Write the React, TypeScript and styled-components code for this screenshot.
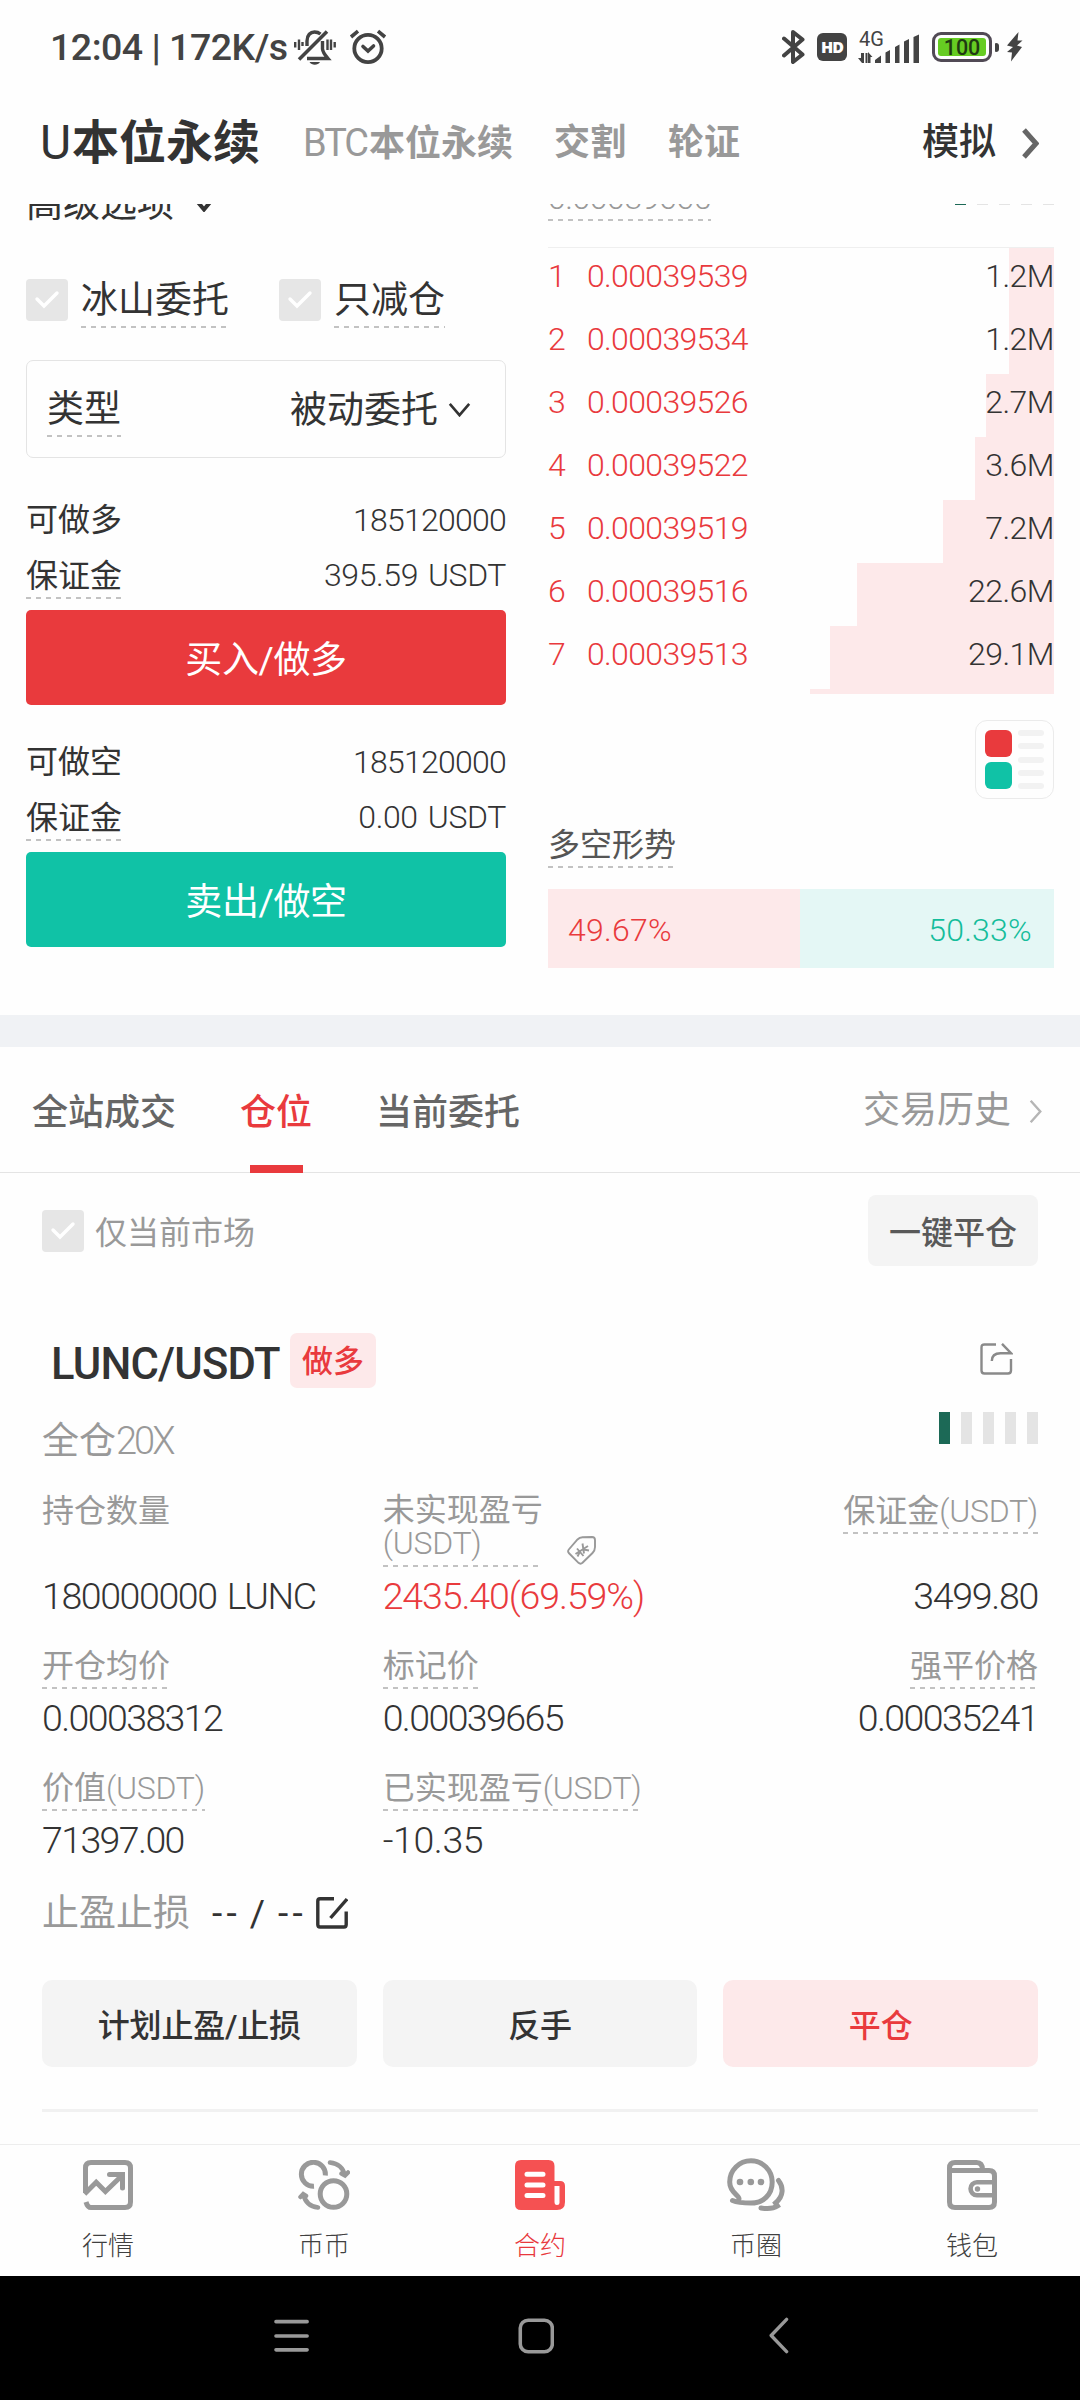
import React from "react";
import styled, { createGlobalStyle } from "styled-components";

const RED = "#e93a3d";
const GREEN = "#10c2a6";
const INK = "#333333";
const MUTED = "#999999";

const GlobalStyle = createGlobalStyle`
  * { box-sizing: border-box; }
  body {
    margin: 0;
    background: #fefefe;
    color: ${INK};
    font-family: Roboto, "Noto Sans CJK SC", sans-serif;
  }
`;

const Screen = styled.div`
  width: 1080px;
  height: 2400px;
  display: flex;
  flex-direction: column;
  background: #fefefe;
  overflow: hidden;
`;

/* status bar */

const StatusBar = styled.header`
  height: 94px;
  flex: none;
  display: flex;
  align-items: center;
  padding: 0 57px 0 50px;
  color: #434343;
`;

const Clock = styled.span`
  width: 244px;
  font-size: 37.5px;
  font-weight: 500;
  letter-spacing: -0.5px;
  white-space: nowrap;
  line-height: 44px;
`;

const StatusLeft = styled.div`
  display: flex;
  align-items: center;
  gap: 13px;
`;

const StatusRight = styled.div`
  margin-left: auto;
  display: flex;
  align-items: center;
`;

const HdBadge = styled.span`
  width: 30px;
  height: 28px;
  margin: 0 11px 0 12px;
  border-radius: 6px;
  background: #434343;
  color: #fff;
  font: 800 16px/28px "Open Sans", Roboto, sans-serif;
  letter-spacing: -1px;
  text-align: center;
`;

const Network = styled.div`
  width: 62px;
  height: 33px;
  display: grid;
  position: relative;
`;

const NetworkLabel = styled.span`
  position: absolute;
  left: 1px;
  top: -1px;
  font: 400 20px/18px Roboto, sans-serif;
`;

const Battery = styled.div`
  width: 60px;
  height: 30px;
  margin-left: 12px;
  padding: 3px;
  border: 3px solid #514a55;
  border-radius: 9px;
`;

const BatteryLevel = styled.div`
  height: 18px;
  border-radius: 3px;
  background: #66cc22;
  color: #1f3a12;
  font: 500 21.5px/19px Roboto, sans-serif;
  text-align: center;
`;

const BatteryTip = styled.span`
  width: 4px;
  height: 9px;
  margin: 0 7px 0 3px;
  border-radius: 1px 3px 3px 1px;
  background: #434343;
`;

/* market header */

const MarketHeader = styled.nav`
  height: 110px;
  flex: none;
  display: flex;
  align-items: center;
  padding: 0 41px 12px 40px;
`;

const MarketTab = styled.span<{ $active?: boolean }>`
  display: flex;
  align-items: baseline;
  font-size: ${(p) => (p.$active ? 47 : 36)}px;
  line-height: 60px;
  font-weight: 700;
  color: ${(p) => (p.$active ? INK : MUTED)};
`;

const MarketLatin = styled.span<{ $size: number; $width: number }>`
  width: ${(p) => p.$width}px;
  font-size: ${(p) => p.$size}px;
  font-weight: 400;
  letter-spacing: -2px;
`;

const DemoLink = styled.span`
  margin-left: auto;
  display: flex;
  align-items: center;
  gap: 25px;
  font-size: 37px;
  font-weight: 500;
  line-height: 60px;
`;

const Spacer = styled.span<{ $w: number }>`
  flex: none;
  width: ${(p) => p.$w}px;
`;

/* shared text pieces */

const Dashed = styled.span<{ $size?: number; $color?: string }>`
  display: inline-block;
  padding-top: 2px;
  font-size: ${(p) => p.$size ?? 32}px;
  line-height: ${(p) => ((p.$size ?? 32) > 35 ? 54 : 46)}px;
  color: ${(p) => p.$color ?? INK};
  white-space: nowrap;
  background: repeating-linear-gradient(90deg, #c2c2c2 0 5px, transparent 5px 10px) left bottom / 100% 2px no-repeat;
`;

const Num = styled.span<{ $size?: number; $track?: number }>`
  font-size: ${(p) => p.$size ?? 32}px;
  font-weight: 350;
  letter-spacing: ${(p) => p.$track ?? ((p.$size ?? 32) > 35 ? -1.6 : -0.75)}px;
  word-spacing: 2.5px;
`;

/* trading panel */

const TradePanel = styled.section`
  height: 811px;
  flex: none;
  display: flex;
  justify-content: space-between;
  padding: 0 26px;
  overflow: hidden;
`;

const OrderForm = styled.div`
  width: 480px;
  margin-top: -27px;
  display: flex;
  flex-direction: column;
`;

const Advanced = styled.div`
  display: flex;
  align-items: center;
  gap: 20px;
  height: 56px;
  font-size: 37px;
  line-height: 56px;
`;

const CheckRow = styled.div`
  display: flex;
  align-items: center;
  height: 56px;
  margin-top: 39px;
`;

const CheckItem = styled.label`
  display: flex;
  align-items: center;
  gap: 13px;
  margin-right: 50px;
`;

const CheckBox = styled.span`
  flex: none;
  width: 42px;
  height: 42px;
  border-radius: 4px;
  background: #e6e6e6;
  display: grid;
  place-items: center;
`;

const SelectField = styled.div`
  height: 98px;
  margin: 32px 0 38px;
  padding: 0 34px 0 20px;
  display: flex;
  align-items: center;
  border: 1px solid #e4e4e4;
  border-radius: 7px;
  font-size: 37px;
`;

const SelectValue = styled.span`
  margin-left: auto;
  margin-right: 10px;
  line-height: 56px;
  padding-top: 4px;
`;

const FormLine = styled.div`
  display: flex;
  justify-content: space-between;
  height: 48px;
  font-size: 32px;
  line-height: 48px;
  & + & { margin-top: 7px; }
`;

const OrderButton = styled.button<{ $side: "buy" | "sell" }>`
  height: 95px;
  margin: 11px 0 33px;
  padding: 0 0 2px;
  border: 0;
  border-radius: 5px;
  background: ${(p) => (p.$side === "buy" ? RED : GREEN)};
  color: #fff;
  font-family: inherit;
  font-size: 37px;
  letter-spacing: -0.4px;
`;

const BookColumn = styled.div`
  width: 506px;
  margin-top: -31px;
  display: flex;
  flex-direction: column;
`;

const MarkLine = styled.div`
  display: flex;
  justify-content: space-between;
  align-items: flex-start;
  height: 48px;
`;

const LevelBars = styled.div`
  display: flex;
  gap: 11px;
`;

const LevelBar = styled.span<{ $on?: boolean }>`
  width: 11px;
  height: 32px;
  background: ${(p) => (p.$on ? "#1c6956" : "#e4e4e4")};
`;

const Book = styled.div`
  margin-top: 26px;
  height: 447px;
  border-top: 1px solid #efefef;
  overflow: hidden;
`;

const BookRow = styled.div<{ $depth: number }>`
  height: 63px;
  display: flex;
  line-height: 56px;
  background: linear-gradient(#fde9ea, #fde9ea) right top / ${(p) => p.$depth}px 100% no-repeat;
`;

const BookRank = styled.span`
  width: 39px;
  color: ${RED};
`;

const BookPrice = styled.span`
  color: ${RED};
`;

const BookAmount = styled.span`
  margin-left: auto;
`;

const ModeSwitch = styled.div`
  align-self: flex-end;
  width: 79px;
  height: 79px;
  margin: 26px 0 21px;
  padding: 9px;
  display: flex;
  justify-content: space-between;
  border: 1px solid #ebebeb;
  border-radius: 12px;
`;

const ModeStack = styled.div`
  display: flex;
  flex-direction: column;
  justify-content: space-between;
`;

const ModeBlock = styled.span<{ $color: string }>`
  width: 27px;
  height: 27px;
  border-radius: 6px;
  background: ${(p) => p.$color};
`;

const ModeDash = styled.span`
  width: 26px;
  height: 6px;
  border-radius: 3px;
  background: #f2f2f2;
`;

const Sentiment = styled.div`
  height: 79px;
  margin-top: 21px;
  display: flex;
  line-height: 83px;
`;

const SentimentSide = styled.div<{ $side: "long" | "short"; $share: number }>`
  flex: ${(p) => p.$share} 0 0;
  padding: 0 22px 0 20px;
  text-align: ${(p) => (p.$side === "long" ? "left" : "right")};
  color: ${(p) => (p.$side === "long" ? RED : "#14bd9b")};
  background: ${(p) => (p.$side === "long" ? "#fde9ea" : "#e4f7f5")};
`;

const Band = styled.div`
  flex: none;
  height: 32px;
  background: #f0f2f5;
`;

/* positions */

const PositionTabs = styled.nav`
  flex: none;
  height: 126px;
  display: flex;
  gap: 64px;
  padding: 0 38px 0 32px;
  border-bottom: 1px solid #e4e4e4;
`;

const PositionTab = styled.span<{ $active?: boolean }>`
  position: relative;
  font-size: 36px;
  font-weight: 500;
  line-height: 133px;
  color: ${(p) => (p.$active ? RED : "#666")};
  &::after {
    content: "";
    display: ${(p) => (p.$active ? "block" : "none")};
    position: absolute;
    left: 10px;
    bottom: -1px;
    width: 53px;
    height: 8px;
    background: ${RED};
  }
`;

const HistoryLink = styled.span`
  margin-left: auto;
  display: flex;
  align-items: center;
  gap: 18px;
  padding-top: 3px;
  color: ${MUTED};
  font-size: 37px;
  line-height: 60px;
`;

const Positions = styled.section`
  flex: 1;
  padding: 22px 42px 0;
`;

const FilterRow = styled.div`
  display: flex;
  align-items: center;
  height: 71px;
`;

const FilterLabel = styled.span`
  margin-left: 11px;
  padding-top: 5px;
  font-size: 32px;
  line-height: 44px;
  color: ${MUTED};
`;

const CloseAll = styled.button`
  margin-left: auto;
  width: 170px;
  height: 71px;
  padding: 0 0 2px;
  border: 0;
  border-radius: 8px;
  background: #f4f4f4;
  color: #595959;
  font-family: inherit;
  font-size: 32px;
  font-weight: 500;
`;

const TitleRow = styled.div`
  display: flex;
  align-items: center;
  height: 55px;
  margin-top: 67px;
  padding-right: 25px;
`;

const Pair = styled.h2`
  width: 248px;
  margin: 0;
  padding: 8px 0 0 9px;
  font-size: 43.5px;
  line-height: 50px;
  font-weight: 500;
  letter-spacing: -0.8px;
`;

const SideBadge = styled.span`
  width: 86px;
  height: 55px;
  margin-right: auto;
  border-radius: 7px;
  background: #fde9ea;
  color: ${RED};
  font-size: 31px;
  font-weight: 500;
  line-height: 58px;
  text-align: center;
`;

const ShareSlot = styled.span`
  display: flex;
  padding-bottom: 4px;
`;

const LeverageRow = styled.div`
  display: flex;
  justify-content: space-between;
  align-items: flex-start;
  height: 53px;
  margin-top: 24px;
`;

const Leverage = styled.span`
  padding-top: 5px;
  font-size: 37px;
  line-height: 48px;
  color: ${MUTED};
`;

const Stats = styled.div`
  display: grid;
  grid-template-columns: repeat(3, 1fr);
  column-gap: 26px;
  row-gap: 23px;
  margin-top: 21px;
`;

const Stat = styled.div<{ $right?: boolean }>`
  display: flex;
  flex-direction: column;
  justify-content: space-between;
  align-items: ${(p) => (p.$right ? "flex-end" : "flex-start")};
  font-size: 32px;
`;

const PlainLabel = styled.span`
  padding-top: 2px;
  line-height: 46px;
  color: ${MUTED};
`;

const WrapLabelRow = styled.div`
  display: flex;
  align-items: flex-end;
  gap: 24px;
`;

const TagSlot = styled.span`
  display: flex;
  padding-bottom: 2px;
`;

const WrapLabel = styled.span`
  width: 160px;
  padding: 8px 0 7px;
  line-height: 33px;
  color: ${MUTED};
  background: repeating-linear-gradient(90deg, #c2c2c2 0 5px, transparent 5px 10px) left bottom / 100% 2px no-repeat;
`;

const StatValue = styled.span<{ $red?: boolean }>`
  margin-top: 7px;
  height: 44px;
  line-height: 44px;
  white-space: nowrap;
  color: ${(p) => (p.$red ? RED : INK)};
`;

const StopRow = styled.div`
  display: flex;
  align-items: center;
  height: 48px;
  margin-top: 27px;
  font-size: 37px;
  line-height: 48px;
`;

const StopLabel = styled.span`
  width: 170px;
  padding-top: 2px;
  color: ${MUTED};
`;

const StopValue = styled.span`
  width: 104px;
  padding-top: 2px;
  letter-spacing: 4.2px;
  word-spacing: -4.5px;
  white-space: nowrap;
`;

const Actions = styled.div`
  display: grid;
  grid-template-columns: repeat(3, 1fr);
  gap: 26px;
  margin-top: 43px;
  padding-bottom: 42px;
  border-bottom: 3px solid #f1f1f1;
`;

const Action = styled.button<{ $danger?: boolean }>`
  height: 87px;
  padding: 0 0 1px;
  border: 0;
  border-radius: 10px;
  background: ${(p) => (p.$danger ? "#fde9ea" : "#f4f4f4")};
  color: ${(p) => (p.$danger ? RED : INK)};
  font-family: inherit;
  font-size: 32px;
  font-weight: 500;
  letter-spacing: -0.2px;
`;

/* bottom bars */

const BottomNav = styled.nav`
  flex: none;
  height: 132px;
  display: grid;
  grid-template-columns: repeat(5, 1fr);
  border-top: 1px solid #ededed;
`;

const NavItem = styled.div<{ $active?: boolean }>`
  padding-top: 13px;
  display: flex;
  flex-direction: column;
  align-items: center;
  font-size: 26px;
  font-weight: 300;
  line-height: 30px;
  color: ${(p) => (p.$active ? "#e8383d" : "#404040")};
`;

const NavIcon = styled.div`
  height: 54px;
  margin-bottom: 19px;
  display: grid;
  place-items: center;
`;

const SystemBar = styled.footer`
  flex: none;
  height: 124px;
  display: flex;
  align-items: center;
  padding: 0 291px 5px 273px;
  background: #000;
`;

/* icons */

const BellOff = () => (
  <svg width="42" height="36" viewBox="0 0 42 36" fill="none" stroke="#434343" strokeWidth="3.4">
    <path d="M13 17V12C13 6 16.5 3 20.500 3C23 3 25 3.800 26.500 5" />
    <path d="M28.500 12V20C29 24 31 26 34 29.500H13" />
    <path d="M5 30.500L33 2.500" strokeWidth="3.600" />
    <path d="M15.500 33H26C24 36.500 17.500 36.500 15.500 33Z" fill="#434343" stroke="none" />
    <path d="M1.200 13V18.500M5 10.500V21M8.500 13V17M33.500 10.500V21M37 10.500V21M40.700 13V18.500" strokeWidth="2.400" />
  </svg>
);

const Alarm = () => (
  <svg width="38" height="36" viewBox="0 0 38 36" fill="none" stroke="#434343" strokeWidth="3.8" strokeLinecap="round">
    <circle cx="19" cy="19.500" r="13.700" />
    <path d="M2 8L9 2.200M36 8L29 2.200" strokeWidth="3.600" strokeLinecap="butt" />
    <path d="M14 17.500L19 22L24.500 17" strokeWidth="3.600" />
  </svg>
);

const Bluetooth = () => (
  <svg width="23" height="36" viewBox="0 0 23 36" fill="none" stroke="#434343" strokeWidth="4" strokeLinejoin="round" strokeLinecap="round">
    <path d="M2 9.500L20.500 25.500L11 33V3L20.500 10.500L2 26.500" />
  </svg>
);

const Signal = () => (
  <svg width="62" height="33" viewBox="0 0 62 33" fill="#434343">
    <path d="M3 22h3v10h-2l-4-5h3zM10 32v-11l4.500 5h-2v6zM7.500 22h2v10h-2z" />
    <path d="M17 32V29L23 24.500V32zM27.500 32V21.500L32 19V32zM37 32V16L41.500 13.500V32zM46 32V10.500L51 8V32zM55.500 32V6L61 3.500V32z" />
  </svg>
);

const Bolt = () => (
  <svg width="17" height="30" viewBox="0 0 17 30" fill="#434343">
    <path d="M12.500 0L1 13.500L7 15L1 20L6 20.500L5 29.500L16 15L11 13.500L16.500 8.500L11.500 8.500Z" />
  </svg>
);

type ChevronProps = { w: number; h: number; stroke: number; color: string; dir: "right" | "down" | "left" };
const Chevron = ({ w, h, stroke, color, dir }: ChevronProps) => {
  const s = stroke / 2 + 0.5;
  const d =
    dir === "right"
      ? `M${s} ${s}L${w - s} ${h / 2}L${s} ${h - s}`
      : dir === "left"
      ? `M${w - s} ${s}L${s} ${h / 2}L${w - s} ${h - s}`
      : `M${s} ${s}L${w / 2} ${h - s}L${w - s} ${s}`;
  return (
    <svg width={w} height={h} viewBox={`0 0 ${w} ${h}`} fill="none" stroke={color} strokeWidth={stroke}>
      <path d={d} strokeLinejoin={dir === "left" ? "round" : "miter"} strokeLinecap={dir === "left" ? "round" : "butt"} />
    </svg>
  );
};

const Tick = () => (
  <svg width="26" height="20" viewBox="0 0 26 20" fill="none" stroke="#fff" strokeWidth="3.4" strokeLinecap="round">
    <path d="M3 9L10 16L23 3" />
  </svg>
);

const ShareIcon = () => (
  <svg width="33" height="32" viewBox="0 0 33 32" fill="none" stroke="#8a8a8a" strokeWidth="2.4">
    <path d="M16 1.500H4.500Q1.500 1.500 1.500 4.500V27.500Q1.500 30.500 4.500 30.500H28Q31 30.500 31 27.500V16" />
    <path d="M22 0.800L31 10.200H20.500C15 10.200 11.800 13 11.800 18" />
  </svg>
);

const TagIcon = () => (
  <svg width="29" height="29" viewBox="0 0 29 29" fill="none" stroke="#999" strokeWidth="1.900">
    <path d="M1.800 13.500L10.500 3.500Q12.500 1.500 15.500 1.300L25 1Q28 1 28 4V11Q28 14.500 25.500 17L15.500 26.800Q13.500 28.500 11.500 26.800L1.800 17Q0.400 15.200 1.800 13.500Z" />
    <path d="M10 12.500L16.500 20M8.500 18L21 10M15.500 7.500L17 17.500M10.500 20.500L13 15.500M16.500 13.500L22 14.500" strokeWidth="1.900" />
  </svg>
);

const EditIcon = () => (
  <svg width="32" height="32" viewBox="0 0 32 32" fill="none" stroke={INK} strokeWidth="3.4">
    <path d="M18 1.800H4Q1.800 1.800 1.800 4V27.500Q1.800 30 4 30H28Q30.200 30 30.200 27.500V14.500" />
    <path d="M31 2L14.500 21" />
  </svg>
);

const QuotesIcon = () => (
  <svg width="50" height="50" viewBox="0 0 50 50" fill="none" stroke="#999" strokeWidth="5">
    <path d="M2.500 33V8Q2.500 2.500 8 2.500H42Q47.500 2.500 47.500 8V42Q47.500 47.500 42 47.500H8Q4.500 47.500 3 42" />
    <path d="M1.500 34L13.200 22.300L22.400 31.500L39 15.500" />
    <path d="M26.500 14.500H39.500V28" strokeLinecap="round" />
  </svg>
);

const SpotIcon = () => (
  <svg width="52" height="50" viewBox="0 0 52 50" fill="none" stroke="#999" strokeWidth="5">
    <path d="M27.300 15.500A12 12 0 1 0 16 26.300" />
    <circle cx="35.500" cy="34" r="13.300" />
    <path d="M32 2.500C40 3.500 45.500 8 46.500 15M43.500 13.500L47 15.500L50 12.500" strokeLinecap="round" strokeWidth="4.500" />
    <path d="M20 47.500C12 46.500 7 42 5.500 34.500M2.500 37L5.200 34.200L8 36" strokeLinecap="round" strokeWidth="4.500" />
  </svg>
);

const ContractIcon = () => (
  <svg width="50" height="50" viewBox="0 0 50 50">
    <path d="M6 0H33.500Q39.500 0 39.500 6V21H45Q50 21 50 26V42Q50 50 42 50H6Q0 50 0 44V6Q0 0 6 0Z" fill="#f55152" />
    <path d="M39.500 26H44.500V43Q44.500 45 42 45Q39.500 45 39.500 42Z" fill="#fff" />
    <path d="M12 14.300H28M12 25H28M12 35.500H28" stroke="#fff" strokeWidth="5" strokeLinecap="round" />
  </svg>
);

const CommunityIcon = () => (
  <svg width="59" height="54" viewBox="0 0 59 54" fill="none" stroke="#999" strokeWidth="5" strokeLinecap="round">
    <path d="M12 41C12.500 37 2.700 35 2.700 24A21.200 21.200 0 0 1 45.200 24C45.200 37 36 45 24 45C15 45 9 44 5.500 42.500" />
    <path d="M51.500 22.500C56.500 29 57 38 48.500 45L50.500 48C46 51 40 51 34 50" />
    <g fill="#999" stroke="none">
      <circle cx="13" cy="24" r="3.300" />
      <circle cx="23.800" cy="24" r="3.300" />
      <circle cx="34" cy="24" r="3.300" />
    </g>
  </svg>
);

const WalletIcon = () => (
  <svg width="50" height="50" viewBox="0 0 50 50" fill="none" stroke="#999" strokeWidth="5">
    <path d="M2.500 14V8Q2.500 2.500 8 2.500H29.500Q35.500 2.500 35.500 10" />
    <path d="M2.500 10.500H42Q47.500 10.500 47.500 16V42Q47.500 47.500 42 47.500H8Q2.500 47.500 2.500 42Z" />
    <path d="M47.500 22.300H30A6.400 6.400 0 0 0 30 35.200H47.500" strokeWidth="4.600" />
    <circle cx="30.500" cy="29" r="2.700" fill="#999" stroke="none" />
  </svg>
);

const MenuIcon = () => (
  <svg width="37" height="36" viewBox="0 0 37 36" stroke="#999" strokeWidth="3.6" strokeLinecap="round">
    <path d="M3 3.500H34.500M3 18H34.500M3 32H34.500" />
  </svg>
);

const HomeIcon = () => (
  <svg width="37" height="36" viewBox="0 0 37 36" fill="none" stroke="#999" strokeWidth="3.6">
    <rect x="2.300" y="2" width="32.400" height="32" rx="8" />
  </svg>
);

/* data */

const asks = [
  { price: "0.00039539", amount: "1.2M", depth: 45 },
  { price: "0.00039534", amount: "1.2M", depth: 45 },
  { price: "0.00039526", amount: "2.7M", depth: 68 },
  { price: "0.00039522", amount: "3.6M", depth: 79 },
  { price: "0.00039519", amount: "7.2M", depth: 111 },
  { price: "0.00039516", amount: "22.6M", depth: 197 },
  { price: "0.00039513", amount: "29.1M", depth: 224 },
];

const navItems = [
  { label: "行情", icon: <QuotesIcon /> },
  { label: "币币", icon: <SpotIcon /> },
  { label: "合约", icon: <ContractIcon />, active: true },
  { label: "币圈", icon: <CommunityIcon /> },
  { label: "钱包", icon: <WalletIcon /> },
];

const Levels = () => (
  <LevelBars>
    {[0, 1, 2, 3, 4].map((i) => (
      <LevelBar key={i} $on={i === 0} />
    ))}
  </LevelBars>
);

const Check = () => (
  <CheckBox>
    <Tick />
  </CheckBox>
);

const Unit = () => <Num $track={-0.25}>(USDT)</Num>;

export default function App() {
  return (
    <>
      <GlobalStyle />
      <Screen>
        <StatusBar>
          <StatusLeft>
            <Clock>12:04 | 172K/s</Clock>
          </StatusLeft>
          <StatusLeft>
            <BellOff />
            <Alarm />
          </StatusLeft>
          <StatusRight>
            <Bluetooth />
            <HdBadge>HD</HdBadge>
            <Network>
              <Signal />
              <NetworkLabel>4G</NetworkLabel>
            </Network>
            <Battery>
              <BatteryLevel>100</BatteryLevel>
            </Battery>
            <BatteryTip />
            <Bolt />
          </StatusRight>
        </StatusBar>

        <MarketHeader>
          <MarketTab $active>
            <MarketLatin $size={48} $width={32}>U</MarketLatin>本位永续
          </MarketTab>
          <Spacer $w={43} />
          <MarketTab>
            <MarketLatin $size={38} $width={66}>BTC</MarketLatin>本位永续
          </MarketTab>
          <Spacer $w={41} />
          <MarketTab>交割</MarketTab>
          <Spacer $w={42} />
          <MarketTab>轮证</MarketTab>
          <DemoLink>
            模拟
            <Chevron w={18} h={33} stroke={5} color="#666" dir="right" />
          </DemoLink>
        </MarketHeader>

        <TradePanel>
          <OrderForm>
            <Advanced>
              高级选项
              <Chevron w={20} h={14} stroke={4} color={INK} dir="down" />
            </Advanced>
            <CheckRow>
              <CheckItem>
                <Check />
                <Dashed $size={37}>冰山委托</Dashed>
              </CheckItem>
              <CheckItem>
                <Check />
                <Dashed $size={37}>只减仓</Dashed>
              </CheckItem>
            </CheckRow>
            <SelectField>
              <Dashed $size={37}>类型</Dashed>
              <SelectValue>被动委托</SelectValue>
              <Chevron w={23} h={15} stroke={2.6} color={INK} dir="down" />
            </SelectField>
            <FormLine>
              <span>可做多</span>
              <Num>185120000</Num>
            </FormLine>
            <FormLine>
              <Dashed>保证金</Dashed>
              <Num $track={-0.4}>395.59 USDT</Num>
            </FormLine>
            <OrderButton $side="buy">买入/做多</OrderButton>
            <FormLine>
              <span>可做空</span>
              <Num>185120000</Num>
            </FormLine>
            <FormLine>
              <Dashed>保证金</Dashed>
              <Num $track={-0.35}>0.00 USDT</Num>
            </FormLine>
            <OrderButton $side="sell">卖出/做空</OrderButton>
          </OrderForm>

          <BookColumn>
            <MarkLine>
              <Dashed $color={MUTED}>
                <Num $track={-0.45}>0.00039665</Num>
              </Dashed>
              <Levels />
            </MarkLine>
            <Book>
              {asks.map((row, i) => (
                <BookRow key={row.price} $depth={row.depth}>
                  <BookRank>
                    <Num>{i + 1}</Num>
                  </BookRank>
                  <BookPrice>
                    <Num $track={-0.65}>{row.price}</Num>
                  </BookPrice>
                  <BookAmount>
                    <Num $track={-0.5}>{row.amount}</Num>
                  </BookAmount>
                </BookRow>
              ))}
              <BookRow $depth={244} />
            </Book>
            <ModeSwitch>
              <ModeStack>
                <ModeBlock $color={RED} />
                <ModeBlock $color={GREEN} />
              </ModeStack>
              <ModeStack>
                {[0, 1, 2, 3, 4].map((i) => (
                  <ModeDash key={i} />
                ))}
              </ModeStack>
            </ModeSwitch>
            <div>
              <Dashed $color="#555">多空形势</Dashed>
            </div>
            <Sentiment>
              <SentimentSide $side="long" $share={49.67}>
                <Num $track={0.25}>49.67%</Num>
              </SentimentSide>
              <SentimentSide $side="short" $share={50.33}>
                <Num $track={0.25}>50.33%</Num>
              </SentimentSide>
            </Sentiment>
          </BookColumn>
        </TradePanel>

        <Band />

        <PositionTabs>
          <PositionTab>全站成交</PositionTab>
          <PositionTab $active>仓位</PositionTab>
          <PositionTab>当前委托</PositionTab>
          <HistoryLink>
            交易历史
            <Chevron w={13} h={25} stroke={2.4} color="#b5b5b5" dir="right" />
          </HistoryLink>
        </PositionTabs>

        <Positions>
          <FilterRow>
            <Check />
            <FilterLabel>仅当前市场</FilterLabel>
            <CloseAll>一键平仓</CloseAll>
          </FilterRow>
          <TitleRow>
            <Pair>LUNC/USDT</Pair>
            <SideBadge>做多</SideBadge>
            <ShareSlot>
              <ShareIcon />
            </ShareSlot>
          </TitleRow>
          <LeverageRow>
            <Leverage>
              全仓<Num $size={38} $track={-3}>20X</Num>
            </Leverage>
            <Levels />
          </LeverageRow>

          <Stats>
            <Stat>
              <PlainLabel>持仓数量</PlainLabel>
              <StatValue>
                <Num $size={37.5} $track={-1.4}>180000000 LUNC</Num>
              </StatValue>
            </Stat>
            <Stat>
              <WrapLabelRow>
                <WrapLabel>
                  未实现盈亏 <Unit />
                </WrapLabel>
                <TagSlot>
                  <TagIcon />
                </TagSlot>
              </WrapLabelRow>
              <StatValue $red>
                <Num $size={37.5} $track={-1.1}>2435.40(69.59%)</Num>
              </StatValue>
            </Stat>
            <Stat $right>
              <Dashed $color={MUTED}>
                保证金<Unit />
              </Dashed>
              <StatValue>
                <Num $size={37.5} $track={-1.3}>3499.80</Num>
              </StatValue>
            </Stat>
            <Stat>
              <Dashed $color={MUTED}>开仓均价</Dashed>
              <StatValue>
                <Num $size={37.5}>0.00038312</Num>
              </StatValue>
            </Stat>
            <Stat>
              <Dashed $color={MUTED}>标记价</Dashed>
              <StatValue>
                <Num $size={37.5}>0.00039665</Num>
              </StatValue>
            </Stat>
            <Stat $right>
              <Dashed $color={MUTED}>强平价格</Dashed>
              <StatValue>
                <Num $size={37.5}>0.00035241</Num>
              </StatValue>
            </Stat>
            <Stat>
              <Dashed $color={MUTED}>
                价值<Unit />
              </Dashed>
              <StatValue>
                <Num $size={37.5}>71397.00</Num>
              </StatValue>
            </Stat>
            <Stat>
              <Dashed $color={MUTED}>
                已实现盈亏<Unit />
              </Dashed>
              <StatValue>
                <Num $size={37.5} $track={-0.4}>-10.35</Num>
              </StatValue>
            </Stat>
          </Stats>

          <StopRow>
            <StopLabel>止盈止损</StopLabel>
            <StopValue>-- / --</StopValue>
            <EditIcon />
          </StopRow>
          <Actions>
            <Action>计划止盈/止损</Action>
            <Action>反手</Action>
            <Action $danger>平仓</Action>
          </Actions>
        </Positions>

        <BottomNav>
          {navItems.map((item) => (
            <NavItem key={item.label} $active={item.active}>
              <NavIcon>{item.icon}</NavIcon>
              {item.label}
            </NavItem>
          ))}
        </BottomNav>
        <SystemBar>
          <MenuIcon />
          <Spacer $w={208} />
          <HomeIcon />
          <Spacer $w={215} />
          <Chevron w={20} h={37} stroke={3.4} color="#999" dir="left" />
        </SystemBar>
      </Screen>
    </>
  );
}
